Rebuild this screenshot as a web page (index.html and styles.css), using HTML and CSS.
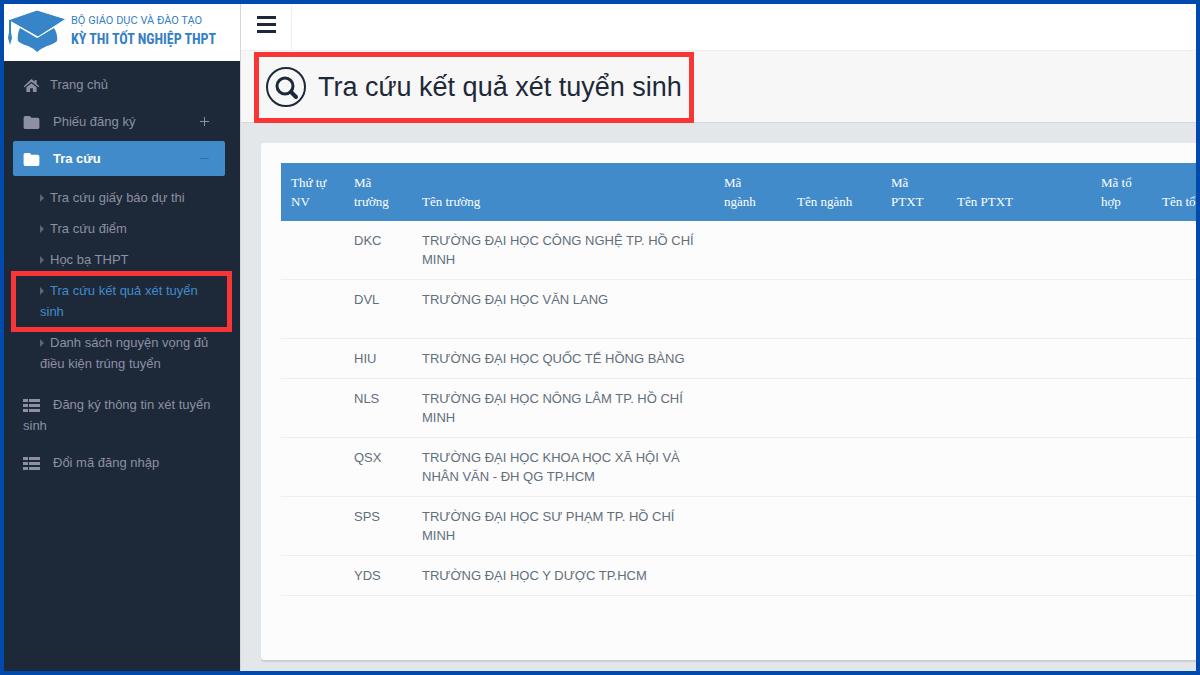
FILE: index.html
```html
<!DOCTYPE html>
<html lang="vi">
<head>
    <meta charset="UTF-8">
    <meta name="viewport" content="width=device-width, initial-scale=1.0">
    <title>Tra cứu kết quả xét tuyển sinh</title>
    <link rel="stylesheet" href="styles.css">
</head>
<body>

    <!-- Shared icons -->
    <svg class="sprite" aria-hidden="true">
        <symbol id="icon-folder" viewBox="0 0 17 14">
            <path d="M2 0h4q2 0 2 2h7q2 0 2 2v8q0 2-2 2H2q-2 0-2-2V2q0-2 2-2z"/>
        </symbol>
        <symbol id="icon-list" viewBox="0 0 17 13">
            <path d="M0 0h5v3H0zM6 0h11v3H6zM0 5h5v3H0zM6 5h11v3H6zM0 10h5v3H0zM6 10h11v3H6z"/>
        </symbol>
    </svg>

    <div class="layout">
        <aside class="sidebar">
            <a class="logo" href="#">
                <svg class="logo-icon" viewBox="0 0 58 42" aria-hidden="true">
                    <path d="M12 18Q9 24 10 31q3 3 10 5 5 2 9 6 5-4 10-6 7-2 10-5 1-7-3-13l-17 10z"/>
                    <path class="logo-cap" d="M0 10L29 0l29 9-28 18z"/>
                    <path d="M1 10h2v12l1 6-2 7-2-7 1-6z"/>
                </svg>
                <span class="logo-text">
                    <span class="logo-small">BỘ GIÁO DỤC VÀ ĐÀO TẠO</span>
                    <strong class="logo-big">KỲ THI TỐT NGHIỆP THPT</strong>
                </span>
            </a>

            <nav>
                <ul class="menu">
                    <li><a href="#"><svg class="icon icon-home" viewBox="0 0 17 14" aria-hidden="true"><path d="M8.500 0L12 3V1h2v4l3 3-1 1-7.500-6L1 9 0 8z"/><path d="M8.500 4.500L14 9v5h-4v-4H7v4H3V9z"/></svg>Trang chủ</a></li>
                    <li><a href="#"><svg class="icon" aria-hidden="true"><use href="#icon-folder"/></svg>Phiếu đăng ký<span class="toggle plus"></span></a></li>
                    <li class="active">
                        <a href="#"><svg class="icon" aria-hidden="true"><use href="#icon-folder"/></svg>Tra cứu<span class="toggle"></span></a>
                        <ul class="submenu">
                            <li><a href="#">Tra cứu giấy báo dự thi</a></li>
                            <li><a href="#">Tra cứu điểm</a></li>
                            <li><a href="#">Học bạ THPT</a></li>
                            <li class="current"><a href="#">Tra cứu kết quả xét tuyển sinh</a></li>
                            <li><a href="#">Danh sách nguyện vọng đủ điều kiện trúng tuyển</a></li>
                        </ul>
                    </li>
                    <li><a href="#"><svg class="icon" aria-hidden="true"><use href="#icon-list"/></svg>Đăng ký thông tin xét tuyển sinh</a></li>
                    <li><a href="#"><svg class="icon" aria-hidden="true"><use href="#icon-list"/></svg>Đổi mã đăng nhập</a></li>
                </ul>
            </nav>
        </aside>

        <main class="main">
            <div class="topbar">
                <button type="button" class="menu-toggle" aria-label="Menu"><span></span><span></span><span></span></button>
            </div>

            <header class="page-header">
                <div class="title">
                    <svg class="title-icon" viewBox="0 0 42 42" aria-hidden="true">
                        <circle cx="21" cy="21" r="19" stroke-width="2"/>
                        <circle cx="20" cy="20" r="8" stroke-width="3"/>
                        <path d="M26 26l5 5" stroke-width="4" stroke-linecap="round"/>
                    </svg>
                    <h1>Tra cứu kết quả xét tuyển sinh</h1>
                </div>
            </header>

            <div class="content">
                <div class="panel">
                    <table>
                        <colgroup>
                            <col class="col-order">
                            <col class="col-code">
                            <col class="col-school">
                            <col class="col-major-code">
                            <col class="col-major">
                            <col class="col-method-code">
                            <col class="col-method">
                            <col class="col-group-code">
                            <col class="col-group">
                        </colgroup>
                        <thead>
                            <tr>
                                <th>Thứ tự NV</th>
                                <th>Mã trường</th>
                                <th>Tên trường</th>
                                <th>Mã ngành</th>
                                <th>Tên ngành</th>
                                <th>Mã PTXT</th>
                                <th>Tên PTXT</th>
                                <th>Mã tổ hợp</th>
                                <th>Tên tổ</th>
                            </tr>
                        </thead>
                        <tbody>
                            <tr><td></td><td>DKC</td><td>TRƯỜNG ĐẠI HỌC CÔNG NGHỆ TP. HỒ CHÍ MINH</td><td></td><td></td><td></td><td></td><td></td><td></td></tr>
                            <tr class="tall"><td></td><td>DVL</td><td>TRƯỜNG ĐẠI HỌC VĂN LANG</td><td></td><td></td><td></td><td></td><td></td><td></td></tr>
                            <tr><td></td><td>HIU</td><td>TRƯỜNG ĐẠI HỌC QUỐC TẾ HỒNG BÀNG</td><td></td><td></td><td></td><td></td><td></td><td></td></tr>
                            <tr><td></td><td>NLS</td><td>TRƯỜNG ĐẠI HỌC NÔNG LÂM TP. HỒ CHÍ MINH</td><td></td><td></td><td></td><td></td><td></td><td></td></tr>
                            <tr><td></td><td>QSX</td><td>TRƯỜNG ĐẠI HỌC KHOA HỌC XÃ HỘI VÀ NHÂN VĂN - ĐH QG TP.HCM</td><td></td><td></td><td></td><td></td><td></td><td></td></tr>
                            <tr><td></td><td>SPS</td><td>TRƯỜNG ĐẠI HỌC SƯ PHẠM TP. HỒ CHÍ MINH</td><td></td><td></td><td></td><td></td><td></td><td></td></tr>
                            <tr><td></td><td>YDS</td><td>TRƯỜNG ĐẠI HỌC Y DƯỢC TP.HCM</td><td></td><td></td><td></td><td></td><td></td><td></td></tr>
                        </tbody>
                    </table>
                </div>
            </div>
        </main>
    </div>

</body>
</html>
```

FILE: styles.css
```css
/* Basic styles */
* {
    box-sizing: border-box;
}

body {
    margin: 0;
    font-family: "Liberation Sans", Arial, sans-serif;
    font-size: 13px;
    line-height: 19px;
    color: #636e7b;
}

a {
    color: inherit;
    text-decoration: none;
}

ul {
    list-style: none;
    margin: 0;
    padding: 0;
}

.sprite {
    display: none;
}

.layout {
    display: flex;
    min-height: 100vh;
    border: 4px solid #004aad;
    background-color: #e4e7ea;
}

/* Sidebar */
.sidebar {
    flex: none;
    width: 236px;
    background-color: #1d2939;
    line-height: 21px;
    color: #8d8fa3;
}

.logo {
    display: flex;
    align-items: flex-start;
    gap: 5px;
    height: 57px;
    padding: 6px 0 0 4px;
    background-color: white;
    color: #3580c3;
}

.logo-icon {
    flex: none;
    width: 58px;
    height: 42px;
    fill: #3785c8;
}

.logo-cap {
    stroke: white;
    stroke-width: 1;
}

.logo-text {
    display: flex;
    flex-direction: column;
    padding-top: 2px;
    line-height: 18px;
    white-space: nowrap;
    font-family: "Roboto Condensed", "Liberation Sans Narrow", Roboto, sans-serif;
}

.logo-small {
    font-family: Roboto, sans-serif;
    font-size: 11px;
}

.logo-big {
    font-size: 14px;
}

.menu {
    padding: 6px 15px 0 9px;
}

.menu > li {
    margin-bottom: 2px;
}

.menu > li > a {
    display: block;
    position: relative;
    padding: 7px 10px;
    border-radius: 2px;
}

.menu > .active > a {
    background-color: #428bca;
    color: white;
    font-weight: bold;
}

.icon {
    width: 17px;
    height: 13px;
    margin-right: 13px;
    vertical-align: -3px;
    fill: currentColor;
}

.icon-home {
    margin-right: 10px;
}

.toggle::before,
.plus::after {
    content: "";
    position: absolute;
    top: 17px;
    right: 16px;
    width: 9px;
    height: 1px;
    background-color: #8d8fa3;
}

.active .toggle::before {
    background-color: #3a6ea3;
}

.plus::after {
    transform: rotate(90deg);
}

.submenu {
    padding: 6px 0;
}

.submenu li {
    position: relative;
}

.submenu a {
    display: block;
    padding: 5px 10px 5px 27px;
}

.submenu a::before {
    content: "";
    display: inline-block;
    margin-right: 6px;
    border: 4px solid transparent;
    border-left-color: #5b6577;
    border-right: 0;
}

.submenu .current a {
    color: #428bca;
}

/* Highlight frames */
.current::after,
.title::after {
    content: "";
    position: absolute;
    border: 5px solid #f93535;
    pointer-events: none;
}

.current::after {
    inset: -4px -7px -5px -2px;
}

.title::after {
    inset: 1px -12px -1px -11px;
}

/* Main column */
.main {
    flex: 1;
    min-width: 0;
    display: flex;
    flex-direction: column;
    overflow: hidden;
    border-left: 1px solid #d3d6da;
}

.topbar {
    display: flex;
    height: 47px;
    background-color: white;
    border-bottom: 1px solid #eeeeee;
}

.menu-toggle {
    display: flex;
    flex-direction: column;
    align-items: center;
    gap: 4px;
    width: 51px;
    padding: 12px 0 0;
    border: 0;
    border-right: 1px solid #eeeeee;
    background: none;
    cursor: pointer;
}

.menu-toggle span {
    width: 19px;
    height: 3px;
    background-color: #1d2939;
}

.page-header {
    display: flex;
    height: 72px;
    padding-left: 24px;
    background-color: #f7f7f7;
    border-bottom: 1px solid #d5d9dd;
}

.title {
    position: relative;
    display: flex;
    align-items: center;
    gap: 11px;
    color: #1d2939;
}

.title-icon {
    width: 42px;
    height: 42px;
    fill: none;
    stroke: #1d2939;
}

h1 {
    margin: 0;
    font-size: 27px;
    line-height: 36px;
    font-weight: normal;
    white-space: nowrap;
}

.content {
    flex: 1;
    display: flex;
    padding: 20px 20px 11px;
}

.panel {
    flex: 1 0 auto;
    padding: 20px;
    background-color: #fcfcfc;
    border-radius: 3px;
    box-shadow: 0 2px 1px rgba(12, 12, 12, 0.1);
}

/* Results table */
table {
    table-layout: fixed;
    width: 1011px;
    border-spacing: 0;
}

.col-order { width: 63px; }
.col-code { width: 68px; }
.col-school { width: 302px; }
.col-major-code { width: 73px; }
.col-major { width: 94px; }
.col-method-code { width: 66px; }
.col-method { width: 144px; }
.col-group-code { width: 61px; }
.col-group { width: 140px; }

th {
    padding: 10px 14px 10px 10px;
    background-color: #428bca;
    color: white;
    font-family: "Liberation Serif", "Times New Roman", serif;
    font-weight: normal;
    text-align: left;
    vertical-align: bottom;
}

td {
    padding: 10px;
    border-bottom: 1px solid #eeeeee;
    vertical-align: top;
}

.tall {
    height: 59px;
}
```
